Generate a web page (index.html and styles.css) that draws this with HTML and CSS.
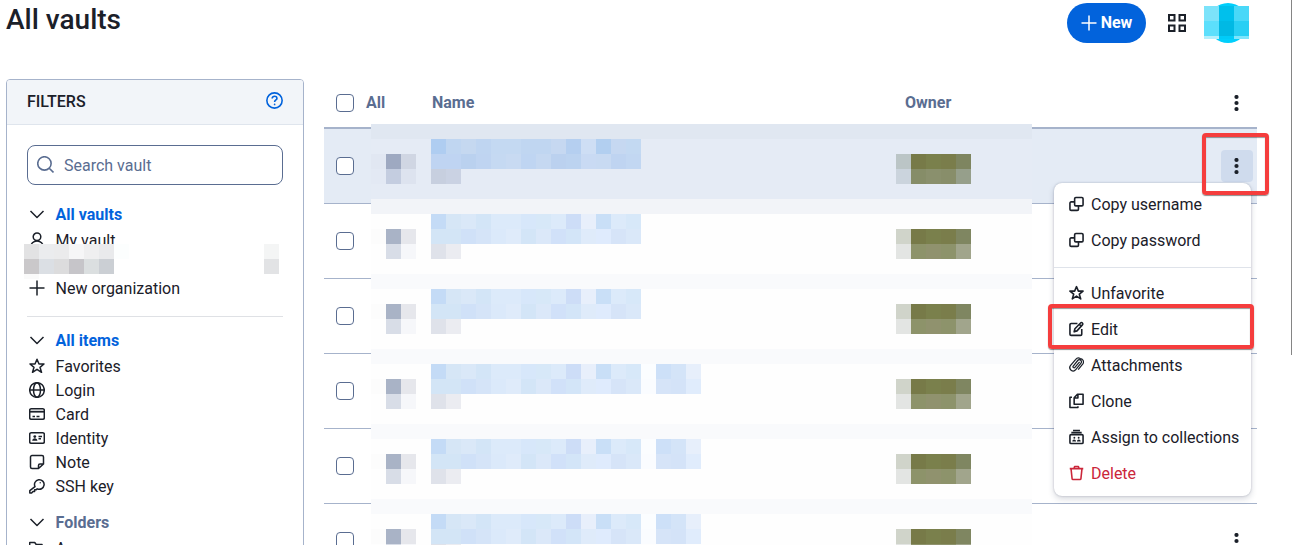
FILE: index.html
```html
<!DOCTYPE html>
<html lang="en">
<head>
    <meta charset="UTF-8">
    <meta name="viewport" content="width=device-width, initial-scale=1.0">
    <title>All vaults</title>
    <link rel="stylesheet" href="styles.css">
</head>
<body>
    <svg class="sprite">
        <symbol id="chevron" viewBox="0 0 16 16"><path d="M1.500 5 8 11.500 14.500 5"/></symbol>
        <symbol id="user" viewBox="0 0 16 16"><circle cx="8" cy="4.800" r="3.800"/><path d="M1.500 15.500c0-4 3-6.500 6.500-6.500s6.500 2.500 6.500 6.500z"/></symbol>
        <symbol id="plus" viewBox="0 0 16 16"><path d="M8 .5v15M.5 8h15"/></symbol>
        <symbol id="star" viewBox="0 0 16 16"><path d="M8 1.200 10 6h5l-4 3.300 1.500 5L8 11.300l-4.500 3 1.500-5L1 6h5z"/></symbol>
        <symbol id="globe" viewBox="0 0 16 16"><circle cx="8" cy="8" r="7.300"/><ellipse cx="8" cy="8" rx="3.500" ry="7.300"/><path d="M.7 8h14.600"/></symbol>
        <symbol id="card" viewBox="0 0 16 16"><rect x=".7" y="2.700" width="14.600" height="10.600" rx="1.500"/><path d="M1 5.700h14" stroke-width="1.800"/><path d="M3.500 10.500h2.500M7.500 10.500h3"/></symbol>
        <symbol id="identity" viewBox="0 0 16 16"><rect x=".7" y="2.700" width="14.600" height="10.600" rx="1.500"/><circle class="fill" cx="5.800" cy="6.600" r="1.400"/><path class="fill" d="M3.200 10.800c0-1.800 1.200-2.600 2.600-2.600s2.600.8 2.600 2.600z"/><path d="M9.500 6.500h3.500M9.500 8.800h2.500"/></symbol>
        <symbol id="note" viewBox="0 0 16 16"><path d="M9.500 14.500H3A1.500 1.500 0 0 1 1.500 13V3A1.500 1.500 0 0 1 3 1.500h10A1.500 1.500 0 0 1 14.500 3v7zM9.500 14.500V11.500a1.500 1.500 0 0 1 1.500-1.500h3.500"/></symbol>
        <symbol id="key" viewBox="0 0 16 16"><path d="M6 8.600a4.800 4.800 0 1 1 2.200 2.200L7 11.800H5.600v1.600H4L2.600 15H.8v-2.300z"/><circle class="fill" cx="11.200" cy="4.800" r=".7"/></symbol>
        <symbol id="folder" viewBox="0 0 16 16"><path d="M.7 13V2.500h5l1.500 2H13v2H4L1 14h11.500l3-7.500H13"/></symbol>
        <symbol id="search" viewBox="0 0 16 16"><circle cx="7" cy="7" r="6.300"/><path d="m11.500 11.500 4 4"/></symbol>
        <symbol id="help" viewBox="0 0 16 16"><circle cx="8" cy="8" r="7.200"/><path d="M5.800 6.200c0-1.300 1-2.200 2.300-2.200s2.200.8 2.200 2c0 1.500-2.200 1.500-2.200 3.300"/><circle class="fill" cx="8.100" cy="11.700" r=".8"/></symbol>
        <symbol id="grid" viewBox="0 0 18 18"><path d="M1 1h5.500v5.500H1zM11.500 1H17v5.500h-5.500zM1 11.500h5.500V17H1zM11.500 11.500H17V17h-5.500z"/></symbol>
        <symbol id="dots" viewBox="0 0 16 16"><circle class="fill" cx="7.500" cy="2" r="2.100"/><circle class="fill" cx="7.500" cy="8" r="2.100"/><circle class="fill" cx="7.500" cy="14" r="2.100"/></symbol>
        <symbol id="copy" viewBox="0 0 16 16"><rect x="6" y="1" width="9" height="9" rx="1.300"/><path d="M6 5.700H2.300A1.300 1.300 0 0 0 1 7v6.500a1.300 1.300 0 0 0 1.300 1.300h6.500a1.300 1.300 0 0 0 1.300-1.300V10"/></symbol>
        <symbol id="edit" viewBox="0 0 16 16"><path d="M9 2.200H2.300A1.300 1.300 0 0 0 1 3.500v10a1.300 1.300 0 0 0 1.300 1.300h10a1.300 1.300 0 0 0 1.300-1.300V8"/><path d="m5.500 11 .8-3.200 6-6.200a1.300 1.300 0 0 1 2 0 1.400 1.400 0 0 1 0 2L8.500 10zM11 3l2 2"/></symbol>
        <symbol id="clip" viewBox="0 0 16 16"><path stroke-width="1.300" d="m11.300 4.600-5 6a1.100 1.100 0 0 1-1.800-1.400L9.300 3.200a2.200 2.200 0 0 1 3.500 2.800l-5.600 7a3.500 3.500 0 0 1-5.500-4.500l5.500-6.500A3.700 3.700 0 0 1 12 1.100a3.700 3.700 0 0 1 3 5.400L9.800 13"/></symbol>
        <symbol id="clone" viewBox="0 0 16 16"><path d="M9 .8h6v10.700H5.500V4.500zM9.500 1v3.800H5.800"/><path d="M3.200 4H1v11h8.500v-1.500"/></symbol>
        <symbol id="collection" viewBox="0 0 16 16"><rect x="1" y="5.500" width="14" height="9.500" rx="1.200"/><path d="M2.500 3.300h11M4.300 1.100h7.400"/><circle class="fill" cx="5.700" cy="8.800" r="1"/><circle class="fill" cx="10.300" cy="8.800" r="1"/><path class="fill" d="M3.500 12.800c0-3 4-3 4 0zM8.500 12.800c0-3 4-3 4 0z"/></symbol>
        <symbol id="trash" viewBox="0 0 16 16"><path d="M.8 3.300h14.400M5.300 3.300 6 1h4l.7 2.300M2.200 3.700l1.100 10.400a1 1 0 0 0 1 .9h7.400a1 1 0 0 0 1-.9l1.100-10.400"/></symbol>
    </svg>

    <header class="page-header">
        <h1>All vaults</h1>
        <div class="header-actions">
            <button class="new-button"><svg class="icon"><use href="#plus"/></svg>New</button>
            <svg class="icon grid-icon"><use href="#grid"/></svg>
            <svg class="avatar" viewBox="0 0 45 40">
                <circle cx="24" cy="20" r="20" fill="#00cffc"/>
                <path fill="#7ce3fa" d="M0 3h15v15H0z"/><path fill="#00c0ec" d="M15 3h15v15H15z"/><path fill="#49d8f8" d="M30 3h15v15H30z"/>
                <path fill="#5cdffc" d="M0 18h15v15H0z"/><path fill="#00b9e4" d="M15 18h15v15H15z"/><path fill="#29cff4" d="M30 18h15v15H30z"/>
                <path fill="#b4effc" d="M0 33h15v3H0z"/><path fill="#00cbf8" d="M15 33h15v3H15z"/><path fill="#7ee5fc" d="M30 33h15v3H30z"/>
            </svg>
        </div>
    </header>

    <main class="content">
        <aside class="filters">
            <div class="filters-header">
                <h2>FILTERS</h2>
                <svg class="icon help"><use href="#help"/></svg>
            </div>
            <div class="filters-body">
                <label class="search"><svg class="icon"><use href="#search"/></svg><input type="text" placeholder="Search vault"></label>
                <ul class="filter-list">
                    <li class="heading"><svg class="icon"><use href="#chevron"/></svg>All vaults</li>
                    <li><svg class="icon"><use href="#user"/></svg>My vault</li>
                    <li class="redacted"><svg class="mosaic" id="orgMosaic"></svg></li>
                    <li><svg class="icon"><use href="#plus"/></svg>New organization</li>
                </ul>
                <ul class="filter-list divided">
                    <li class="heading"><svg class="icon"><use href="#chevron"/></svg>All items</li>
                    <li><svg class="icon"><use href="#star"/></svg>Favorites</li>
                    <li><svg class="icon"><use href="#globe"/></svg>Login</li>
                    <li><svg class="icon"><use href="#card"/></svg>Card</li>
                    <li><svg class="icon"><use href="#identity"/></svg>Identity</li>
                    <li><svg class="icon"><use href="#note"/></svg>Note</li>
                    <li><svg class="icon"><use href="#key"/></svg>SSH key</li>
                </ul>
                <ul class="filter-list folders">
                    <li class="heading muted"><svg class="icon"><use href="#chevron"/></svg>Folders</li>
                    <li><svg class="icon"><use href="#folder"/></svg>A</li>
                </ul>
            </div>
        </aside>

        <section class="vault">
            <div class="vault-head">
                <span class="checkbox"></span>
                <span class="col-all">All</span>
                <span class="col-name">Name</span>
                <span class="col-owner">Owner</span>
                <span class="options"><svg class="icon"><use href="#dots"/></svg></span>
            </div>
            <div class="vault-rows" id="rows"></div>

            <div class="menu">
                <div class="menu-item"><svg class="icon"><use href="#copy"/></svg>Copy username</div>
                <div class="menu-item"><svg class="icon"><use href="#copy"/></svg>Copy password</div>
                <hr>
                <div class="menu-item"><svg class="icon"><use href="#star"/></svg>Unfavorite</div>
                <div class="menu-item">
                    <svg class="icon"><use href="#edit"/></svg>Edit
                    <span class="highlight highlight-edit"></span>
                </div>
                <div class="menu-item"><svg class="icon"><use href="#clip"/></svg>Attachments</div>
                <div class="menu-item"><svg class="icon"><use href="#clone"/></svg>Clone</div>
                <div class="menu-item"><svg class="icon"><use href="#collection"/></svg>Assign to collections</div>
                <div class="menu-item danger"><svg class="icon"><use href="#trash"/></svg>Delete</div>
            </div>
            <span class="highlight highlight-options"></span>
        </section>
    </main>
    <div class="scrollbar"></div>

    <script src="script.js"></script>
</body>
</html>
```
FILE: styles.css
```css
:root {
    --text: #1b2029;
    --muted: #5a6d91;
    --primary: #0263dc;
    --line: #a6b3cb;
    --red: #f53d3d;
}

* {
    box-sizing: border-box;
}

body {
    position: relative;
    margin: 0;
    height: 545px;
    overflow: hidden;
    background: #fff;
    color: var(--text);
    font: 16px/24px Roboto, sans-serif;
}

.sprite {
    display: none;
}

.icon {
    width: 16px;
    height: 16px;
    flex: none;
    fill: none;
    stroke: currentColor;
    stroke-width: 1.5;
    stroke-linejoin: round;
}

.fill {
    fill: currentColor;
    stroke: none;
}

.page-header {
    display: flex;
    justify-content: space-between;
    align-items: flex-start;
    height: 79px;
    padding: 3px 43px 0 6px;
}

h1 {
    margin: 0;
    font-size: 28px;
    line-height: 34px;
    font-weight: 500;
}

.header-actions {
    display: flex;
    align-items: center;
}

.new-button {
    display: flex;
    align-items: center;
    justify-content: center;
    gap: 4px;
    width: 79px;
    height: 40px;
    padding: 0 0 1px;
    border: 0;
    border-radius: 20px;
    background: var(--primary);
    color: #fff;
    font: 700 16px Roboto, sans-serif;
}

.grid-icon {
    width: 18px;
    height: 18px;
    margin: 0 18px 0 22px;
    stroke-width: 2;
    stroke-linejoin: miter;
}

.avatar {
    width: 45px;
    height: 40px;
}

.content {
    display: flex;
    align-items: flex-start;
    gap: 20px;
    padding-left: 6px;
}

.filters {
    width: 298px;
    height: 500px;
    border: 1px solid var(--line);
    border-radius: 4px;
    overflow: hidden;
}

.filters-header {
    display: flex;
    align-items: center;
    justify-content: space-between;
    height: 45px;
    padding: 0 20px;
    border-bottom: 1px solid #dfe5ed;
    background: #f2f5f9;
}

.filters-header h2 {
    margin: 0;
    font-size: 16px;
    font-weight: 500;
}

.help {
    width: 17px;
    height: 17px;
    color: var(--primary);
    margin-top: -3px;
}

.filters-body {
    padding: 20px;
}

.search {
    display: flex;
    align-items: center;
    gap: 10px;
    height: 40px;
    padding: 2px 9px 0;
    border: 1px solid var(--muted);
    border-radius: 8px;
    color: var(--muted);
}

.search .icon {
    width: 17px;
    height: 17px;
    margin-top: -4px;
}

.search input {
    width: 180px;
    padding: 0;
    border: 0;
    outline: 0;
    font: inherit;
}

.search input::placeholder {
    color: var(--muted);
}

.filter-list {
    margin: 15px 0 0;
    padding: 0;
    list-style: none;
}

.filter-list li {
    display: flex;
    align-items: center;
    gap: 10.6px;
    height: 24px;
    padding: 2px 0 0 2px;
}

.filter-list .icon {
    margin-top: -2px;
}

.filter-list .heading {
    height: 28px;
    color: var(--primary);
    font-weight: 700;
}

.filter-list .heading .icon {
    color: var(--text);
}

.filter-list .heading.muted {
    color: var(--muted);
}

.filter-list.divided {
    margin-top: 16px;
    padding-top: 9px;
    border-top: 1px solid #dfe1e5;
}

.filter-list.folders {
    margin-top: 10px;
}

.redacted {
    position: relative;
}

.redacted .mosaic {
    position: absolute;
    left: -3px;
    top: -8px;
    width: 255px;
    height: 35px;
}

.vault {
    position: relative;
    width: 933px;
}

.vault-head {
    display: flex;
    align-items: center;
    height: 50px;
    padding: 0 4px 0 12px;
    border-bottom: 2px solid var(--line);
    color: var(--muted);
    font-weight: 700;
}

.checkbox {
    width: 18px;
    height: 18px;
    border: 1px solid var(--muted);
    border-radius: 4px;
    background: #fff;
}

.col-all {
    width: 66px;
    margin-left: 12px;
}

.col-name {
    width: 473px;
}

.options {
    display: flex;
    align-items: center;
    justify-content: center;
    width: 32px;
    height: 32px;
    margin-left: auto;
    border-radius: 4px;
    color: var(--text);
}

.row {
    position: relative;
    display: flex;
    align-items: center;
    height: 75px;
    padding: 0 4px 0 12px;
    border-bottom: 1px solid var(--line);
}

.row.active {
    background: #e4ebf5;
}

.row.active .options {
    background: #cfdbed;
}

.row .mosaic {
    position: absolute;
    left: 47px;
    top: -5px;
    width: 661px;
    height: 75px;
}

.menu {
    position: absolute;
    left: 730px;
    top: 104px;
    width: 197px;
    height: 313px;
    padding-top: 3px;
    border-radius: 8px;
    background: #fff;
    box-shadow: 0 0 2px rgba(40, 50, 80, .3), 0 3px 6px rgba(40, 50, 80, .18);
}

.menu hr {
    height: 1px;
    margin: 9px 0 7px;
    border: 0;
    background: #dfe3ea;
}

.menu-item {
    position: relative;
    display: flex;
    align-items: center;
    gap: 7px;
    height: 36px;
    padding: 2px 0 0 15px;
    white-space: nowrap;
}

.menu-item .icon {
    width: 15px;
    margin-top: -2px;
    stroke-width: 1.7;
}

.menu-item.danger {
    color: #cb263a;
}

.highlight {
    position: absolute;
    border: 4px solid var(--red);
    border-radius: 4px;
    box-shadow: 0 1px 1px rgba(0, 0, 0, .45), inset 0 1px 1px rgba(0, 0, 0, .4);
}

.highlight-edit {
    left: -6px;
    top: -7px;
    width: 206px;
    height: 45px;
}

.highlight-options {
    left: 878px;
    top: 54px;
    width: 67px;
    height: 62px;
}

.scrollbar {
    position: absolute;
    top: 0;
    right: 0;
    width: 1px;
    height: 355px;
    background: #858585;
}
```
FILE: script.js
```js
const TILE = 15;

// each strip is [x, y, colors], drawn left to right
const base = {
    top: "#f9fafc",
    back: "#fefefe",
    strips: [
        [0, 30, ["#fcfcfc", "#a9b3c6", "#e6e7ec"]],
        [0, 45, ["#fefefe", "#d8dde7", "#f6f7fa"]],
        [60, 15, ["#c4dbf6", "#d6e6f6", "#dae8f8", "#d3e5f7", "#dceafa", "#dceafa", "#d7e7fa", "#d7e8f8", "#dceafa", "#cdddf7", "#e8effb", "#c9dff7", "#dceafa", "#d7e8f9"]],
        [60, 30, ["#d3e5f6", "#d3e5f6", "#d0e1f8", "#d5e4f8", "#dbe9fa", "#dfebfa", "#d3e5f7", "#dbe8f9", "#d1e1f9", "#d3e5f8", "#dfebfa", "#dfebfd", "#d6e4f8", "#dae8f9"]],
        [60, 45, ["#dfe2ea", "#ebecf1"]],
        [525, 30, ["#d0d4ca", "#777a48", "#7a804c", "#7a7d4b", "#7f8661"]],
        [525, 45, ["#e3e5e3", "#8d936a", "#90926e", "#8d936b", "#a1a58c"]]
    ]
};

const active = {
    top: "#e0e7f1",
    back: "#e5ebf5",
    strips: [
        [0, 30, ["#e1e7f2", "#9ea9c1", "#d0d6e3"]],
        [0, 45, ["#e3e9f4", "#c4cde0", "#dde3ef"]],
        [60, 15, ["#afcdf1", "#c0d6f1", "#c5d8f0", "#bfd5f1", "#c4d9f2", "#c4d9f2", "#c0d6f1", "#c0d6f1", "#c6d8f1", "#b5cff0", "#cedef4", "#b2cff0", "#c6d8f1", "#c3d9f2"]],
        [60, 30, ["#bfd4f2", "#bfd4f2", "#bad1ef", "#bfd4f1", "#c5d9f2", "#c8daf2", "#bfd5f2", "#c5d8f1", "#bbd1ef", "#bcd3f0", "#c9daf3", "#c8daf2", "#bfd4f1", "#c2d7f2"]],
        [60, 45, ["#c7cfdf", "#cad2e3"]],
        [525, 30, ["#bbc5c6", "#777a48", "#7a804c", "#7a7d4b", "#7e8560"]],
        [525, 45, ["#cbd4dd", "#868d68", "#8a906d", "#888e6a", "#969f8b"]]
    ]
};

// wider names take four more tiles
const long = [
    [270, 15, ["#fbfdff", "#cde0f8", "#d4e4f8", "#e7effb"]],
    [270, 30, ["#fafcff", "#d6e4f8", "#d4e3f8", "#e0ecfc"]]
];

const org = [
    [0, 0, ["#e2e2e3", "#ebecee", "#ebebec", "#f6f6f7", "#efeff0", "#e9eaec", "#fcfefe"]],
    [0, 15, ["#cac8ca", "#dbdfe4", "#dcdcdd", "#c6c5c9", "#dbdfe0", "#cbcfd4"]],
    [0, 30, ["#fafafa"]],
    [240, 0, ["#f4f5f5"]],
    [240, 15, ["#e2e3e5"]]
];

function rect(x, y, width, height, color) {
    return `<rect x="${x}" y="${y}" width="${width}" height="${height}" fill="${color}"/>`;
}

function drawStrips(strips) {
    return strips.map(([x, y, colors]) =>
        colors.map((color, i) => rect(x + i * TILE, y, TILE, TILE, color)).join("")
    ).join("");
}

function drawRow(index) {
    const data = index === 0 ? active : base;
    const strips = index > 2 ? data.strips.concat(long) : data.strips;
    const top = index === 1 ? "#f2f4f8" : data.top;
    return `
        <div class="row${index === 0 ? " active" : ""}">
            <span class="checkbox"></span>
            <svg class="mosaic">
                ${rect(0, 0, 661, 75, data.back)}
                ${rect(0, 0, 661, TILE, top)}
                ${drawStrips(strips)}
            </svg>
            <span class="options"><svg class="icon"><use href="#dots"/></svg></span>
        </div>`;
}

document.getElementById("rows").innerHTML = [0, 1, 2, 3, 4, 5].map(drawRow).join("");
document.getElementById("orgMosaic").innerHTML =
    rect(0, 0, 105, 30, "#fff") + drawStrips(org);
```
